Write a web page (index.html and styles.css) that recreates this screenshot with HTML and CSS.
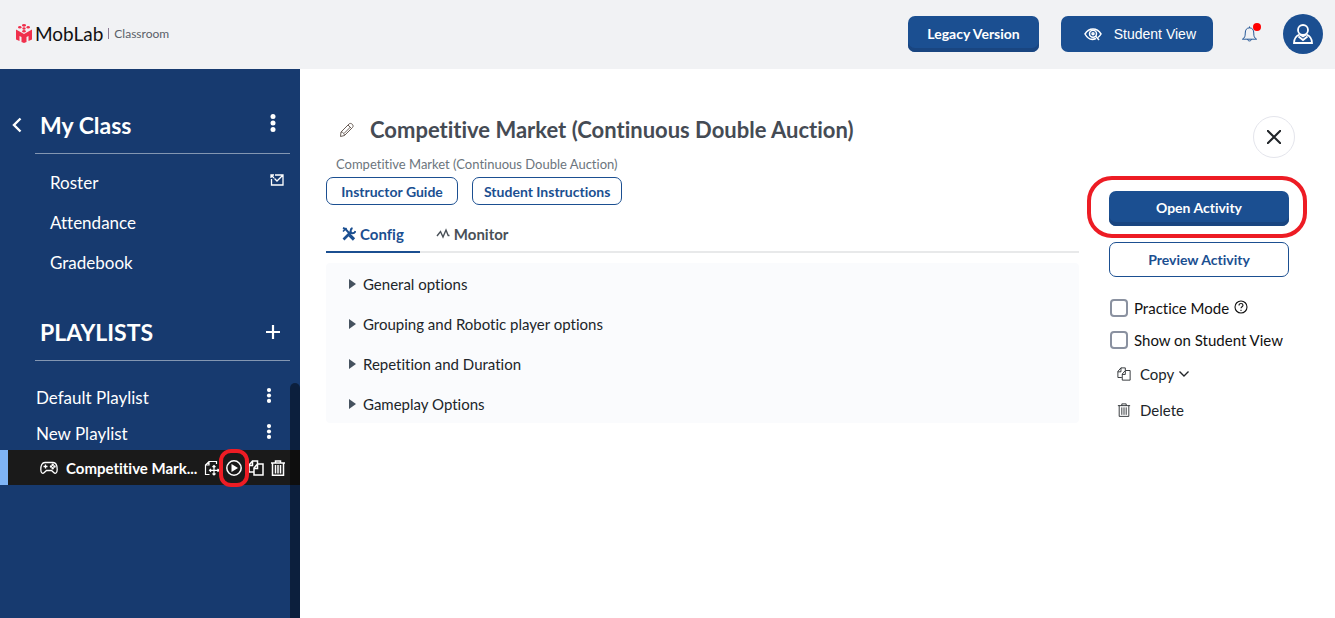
FILE: index.html
```html
<!DOCTYPE html>
<html lang="en">

<head>
    <meta charset="UTF-8">
    <meta name="viewport" content="width=device-width, initial-scale=1.0">
    <title>MobLab Classroom</title>
    <link rel="stylesheet" href="styles.css">
</head>

<body>
    <!-- shared icons -->
    <svg class="sprite" aria-hidden="true">
        <symbol id="dots" viewBox="0 0 6 18">
            <circle cx="3" cy="2.5" r="2.5" /><circle cx="3" cy="9" r="2.5" /><circle cx="3" cy="15.5" r="2.5" />
        </symbol>
        <symbol id="copy" viewBox="0 0 16 16">
            <path d="M5.500 12H1V5l3.500-4H9.500V3.500M1 5.500h3.500V1M6 15V8l3.500-4H15v11zM6 8.500h3.500V4" />
        </symbol>
        <symbol id="trash" viewBox="0 0 16 16">
            <path d="M1 3h14M5.500 3V1h5v2M2.500 3v12.300h11V3M5.500 5v8.500M8 5v8.500M10.500 5v8.500" />
        </symbol>
    </svg>

    <header class="topbar">
        <a class="brand" href="#">
            <svg class="brand-logo" viewBox="0 0 18 20">
                <g fill="#f0304c">
                    <ellipse cx="9" cy="2.300" rx="2" ry="1.400" /><ellipse cx="4.800" cy="4.300" rx="1.700" ry="1.200" /><ellipse cx="13.200" cy="4.300" rx="1.700" ry="1.200" />
                    <ellipse cx="9" cy="5.500" rx="1.600" ry="1.200" /><ellipse cx="9" cy="8.200" rx="1.800" ry="1.200" />
                    <path d="M1 6.500l8 4.500 8-4.500v10l-3.500 1.500v-5l-2 1V19L9 20l-2.500-1v-5l-2-1v5L1 16.500z" />
                </g>
            </svg>
            <span class="brand-name">MobLab</span>
            <span class="brand-sep"></span>
            <span class="brand-sub">Classroom</span>
        </a>
        <div class="top-actions">
            <button class="btn btn-primary btn-legacy">Legacy Version</button>
            <button class="btn btn-student">
                <svg class="icon-eye" viewBox="0 0 18 14">
                    <path d="M12 11.500C7.500 13.500 3.500 11.500 1 7c4-6.700 12-6.700 16 0-.8 1.500-1.800 2.600-3 3.500" />
                    <circle cx="9" cy="6.700" r="3.500" /><circle cx="9" cy="6.700" r="1" />
                    <path d="M11.500 9l3.500 4" />
                </svg>
                Student View
            </button>
            <button class="bell" aria-label="Notifications">
                <svg viewBox="0 0 18 18">
                    <path d="M9 1v1.500M1.500 14.500c2.500-1.500 3-3 3-6.500 0-3.500 1.500-5.500 4.500-5.500s4.500 2 4.500 5.500c0 3.500.5 5 3 6.500zM7 14.500c0 2.500 4 2.500 4 0" />
                </svg>
                <span class="bell-dot"></span>
            </button>
            <button class="avatar" aria-label="Account">
                <svg viewBox="0 0 20 20">
                    <circle cx="10" cy="6" r="5" />
                    <path d="M6.500 10.500C3 12 1 14.500 1 19h18c0-4.500-2-7-5.500-8.500M5.500 12.500l4.500 3.500 4.500-3.500M7 10.500l3 2 3-2" />
                </svg>
            </button>
        </div>
    </header>

    <div class="page">
        <aside class="sidebar">
            <div class="side-title">
                <button class="back" aria-label="Back">
                    <svg viewBox="0 0 10 16"><path d="M8.500 1.500L2 8l6.500 6.500" /></svg>
                </button>
                <h2>My Class</h2>
                <button class="more" aria-label="Class menu"><svg><use href="#dots" /></svg></button>
            </div>
            <nav class="side-nav">
                <div class="nav-row">
                    <a href="#">Roster</a>
                    <button class="mail" aria-label="Invite">
                        <svg viewBox="0 0 14 12"><path d="M5 1h8v10H1.500V5M1 1l3 3M1 4V1h3M4.500 4.500L7 7l6-6" /></svg>
                    </button>
                </div>
                <div class="nav-row"><a href="#">Attendance</a></div>
                <div class="nav-row"><a href="#">Gradebook</a></div>
            </nav>
            <div class="side-title side-title-playlists">
                <h2>PLAYLISTS</h2>
                <button class="add" aria-label="Add playlist">
                    <svg viewBox="0 0 14 14"><path d="M7 0v14M0 7h14" /></svg>
                </button>
            </div>
            <div class="playlists">
                <div class="playlist">
                    <a href="#">Default Playlist</a>
                    <button class="more more-small" aria-label="Playlist menu"><svg><use href="#dots" /></svg></button>
                </div>
                <div class="playlist">
                    <a href="#">New Playlist</a>
                    <button class="more more-small" aria-label="Playlist menu"><svg><use href="#dots" /></svg></button>
                </div>
                <div class="activity">
                    <svg class="gamepad" viewBox="0 0 18 14">
                        <path d="M5 1.500h8c3 0 4.200 3 4.200 7 0 4-2 4.500-3.500 3L11.500 9.500h-5l-2.200 2c-1.500 1.500-3.500 1-3.500-3 0-4 1.200-7 4.200-7zM3.500 5.500h4M5.500 3.500v4" />
                        <circle cx="11" cy="5.500" r=".6" /><circle cx="14.500" cy="5.500" r=".6" /><circle cx="12.700" cy="3.800" r=".6" /><circle cx="12.700" cy="7.200" r=".6" />
                    </svg>
                    <a href="#">Competitive Mark...</a>
                    <div class="activity-tools">
                        <button aria-label="Move">
                            <svg class="thin" viewBox="0 0 16 16">
                                <path d="M5.500 14.500H1.500V5L5 1.500h7.500V4M1.500 5H5V1.500M10 5.500v9.500M5.500 10.300H15M8.500 7L10 5.500 11.500 7M8.500 13.500L10 15l1.500-1.500M7 8.800l-1.500 1.500L7 11.800M13.500 8.800l1.500 1.500-1.500 1.500" />
                            </svg>
                        </button>
                        <button class="play" aria-label="Open">
                            <svg viewBox="0 0 16 16">
                                <circle cx="8" cy="8" r="7.200" />
                                <path class="solid" d="M5.500 4v8L12 8z" />
                            </svg>
                            <span class="ring ring-small"></span>
                        </button>
                        <button aria-label="Copy"><svg><use href="#copy" /></svg></button>
                        <button aria-label="Delete"><svg><use href="#trash" /></svg></button>
                    </div>
                </div>
                <div class="scrollbar"></div>
            </div>
        </aside>

        <main class="content">
            <section class="details">
                <div class="title-row">
                    <button class="edit" aria-label="Rename">
                        <svg viewBox="0 0 16 16">
                            <path d="M1.500 14.500l.5-4.500 8-8c2-2 5.500 1.500 3.500 3.500l-8 8zM2 10c2 0 3.500 1.500 3.500 3.500M9 3l4 4M5.500 11l6-6" />
                        </svg>
                    </button>
                    <h1>Competitive Market (Continuous Double Auction)</h1>
                </div>
                <p class="subtitle">Competitive Market (Continuous Double Auction)</p>
                <div class="guides">
                    <button class="btn btn-outline btn-small">Instructor Guide</button>
                    <button class="btn btn-outline btn-small">Student Instructions</button>
                </div>
                <div class="tabs">
                    <button class="tab active">
                        <svg class="tools" viewBox="0 0 14 14">
                            <path d="M7.500 8L12 12.500" stroke-width="3.200" /><path d="M1 1l2.500 1 4.500 5" stroke-width="2" />
                            <path d="M1.500 12.500L9 5" stroke-width="2.600" /><path d="M10.500 1C8 2 8 6 10.500 6.200c1.500 0 2.500-.7 3-2.200" stroke-width="2" />
                            <path d="M1 4.500L4.500 1" stroke-width="1.600" />
                        </svg>
                        Config
                    </button>
                    <button class="tab">
                        <svg class="pulse" viewBox="0 0 14 14"><path d="M1 9l3.500-4.500 2.500 5.500 3-7 2.200 5.500h1.300" /></svg>
                        Monitor
                    </button>
                </div>
                <div class="options">
                    <button class="option">General options</button>
                    <button class="option">Grouping and Robotic player options</button>
                    <button class="option">Repetition and Duration</button>
                    <button class="option">Gameplay Options</button>
                </div>
            </section>

            <section class="actions">
                <button class="close" aria-label="Close">
                    <svg viewBox="0 0 14 14"><path d="M0 0l14 14M14 0L0 14" /></svg>
                </button>
                <div class="open-wrap">
                    <button class="btn btn-primary btn-wide">Open Activity</button>
                    <span class="ring ring-large"></span>
                </div>
                <button class="btn btn-outline btn-wide">Preview Activity</button>
                <div class="checks">
                    <div class="check">
                        <input type="checkbox" id="practice">
                        <label for="practice">Practice Mode</label>
                        <button class="help" aria-label="About practice mode">
                            <svg viewBox="0 0 14 14">
                                <circle cx="7" cy="7" r="6" />
                                <path d="M5 5.500c0-2.700 4-2.500 4-.2C9 6.700 7 6.800 7 8.300M7 9.700v1.300" />
                            </svg>
                        </button>
                    </div>
                    <div class="check">
                        <input type="checkbox" id="show">
                        <label for="show">Show on Student View</label>
                    </div>
                </div>
                <button class="link-btn">
                    <svg><use href="#copy" /></svg>
                    Copy
                    <svg class="chevron" viewBox="0 0 10 6"><path d="M.5.5L5 5 9.500.5" /></svg>
                </button>
                <button class="link-btn">
                    <svg><use href="#trash" /></svg>
                    Delete
                </button>
            </section>
        </main>
    </div>
</body>

</html>
```
FILE: styles.css
```css
* {
    box-sizing: border-box;
}

body {
    margin: 0;
    min-height: 100vh;
    display: flex;
    flex-direction: column;
    font-family: Lato, sans-serif;
    font-size: 15px;
    font-variant-ligatures: none;
    color: #212529;
    background: #fff;
}

h1,
h2,
p {
    margin: 0;
}

a {
    color: inherit;
    text-decoration: none;
}

button {
    padding: 0;
    border: none;
    background: none;
    color: inherit;
    font-family: inherit;
    font-size: inherit;
    font-variant-ligatures: none;
    cursor: pointer;
}

svg {
    display: block;
    flex-shrink: 0;
    fill: none;
    stroke: currentColor;
}

.sprite {
    position: absolute;
    width: 0;
    height: 0;
}

/* top bar */
.topbar {
    display: flex;
    justify-content: space-between;
    align-items: center;
    padding: 14px 12px 15px 15px;
    background: #f1f2f4;
}

.brand {
    display: flex;
    align-items: center;
    padding-bottom: 2px;
}

.brand-logo {
    width: 18px;
    height: 20px;
    margin-right: 2px;
    stroke: none;
}

.brand-name {
    color: #111;
    font-size: 19px;
}

.brand-sep {
    width: 1px;
    height: 11px;
    margin: 0 5px;
    background: #8c7a94;
}

.brand-sub {
    color: #5a6068;
    font-size: 12px;
}

.top-actions {
    display: flex;
    align-items: center;
}

.btn {
    display: flex;
    align-items: center;
    justify-content: center;
    border-radius: 7px;
    font-size: 14px;
    font-weight: bold;
}

.btn-primary {
    padding-bottom: 2px;
    color: #fff;
    background: #1b4f91;
    box-shadow: inset 0 -4px 0 #194580;
}

.btn-outline {
    color: #1b4f91;
    background: #fff;
    border: 1px solid #1b4f91;
}

.btn-legacy {
    height: 36px;
    padding: 0 19px 2px;
    margin-right: 22px;
}

.btn-student {
    height: 36px;
    padding: 0 17px 0 23px;
    gap: 12px;
    margin-right: 28px;
    color: #fff;
    background: #1b4f91;
    font-family: "Liberation Sans", Arial, sans-serif;
    font-weight: normal;
}

.icon-eye {
    width: 18px;
    height: 14px;
    stroke-width: 1.5;
}

.bell {
    position: relative;
    margin-right: 25px;
    color: #1b4f91;
}

.bell svg {
    width: 17px;
    height: 18px;
}

.bell-dot {
    position: absolute;
    top: -2px;
    right: -3px;
    width: 8px;
    height: 8px;
    border-radius: 50%;
    background: #f00;
}

.avatar {
    display: flex;
    align-items: center;
    justify-content: center;
    width: 40px;
    height: 40px;
    border-radius: 50%;
    color: #fff;
    background: #1b4f91;
}

.avatar svg {
    width: 20px;
    height: 20px;
    stroke-width: 1.8;
}

.page {
    flex: 1;
    display: flex;
}

/* sidebar */
.sidebar {
    width: 300px;
    flex-shrink: 0;
    display: flex;
    flex-direction: column;
    padding-top: 28px;
    color: #fff;
    background: #173a6f;
}

.side-title {
    display: flex;
    align-items: center;
    position: relative;
    height: 57px;
    margin: 0 10px 0 35px;
    padding: 0 11px 0 5px;
    border-bottom: 1px solid #8396b2;
}

.side-title h2 {
    flex: 1;
    font-size: 23px;
    line-height: 30px;
}

.back {
    position: absolute;
    left: -23px;
}

.back svg {
    width: 10px;
    height: 16px;
    stroke-width: 2.4;
}

.more svg {
    width: 6px;
    height: 18px;
    fill: currentColor;
    stroke: none;
}

.side-title .more {
    margin: 0 3px 4px 0;
}

.more-small svg {
    width: 6px;
    height: 15px;
    margin-bottom: 3px;
}

.side-nav {
    padding: 8px 16px 0 50px;
}

.nav-row {
    display: flex;
    align-items: center;
    justify-content: space-between;
    height: 40px;
    font-size: 17px;
}

.mail svg {
    width: 14px;
    height: 12px;
    margin-bottom: 4px;
    stroke-width: 1.3;
}

.side-title-playlists {
    margin-top: 22px;
    padding-right: 10px;
}

.add svg {
    width: 14px;
    height: 14px;
    stroke-width: 2.2;
}

.playlists {
    flex: 1;
    position: relative;
    padding-top: 17px;
}

.playlist {
    display: flex;
    align-items: center;
    justify-content: space-between;
    height: 36px;
    padding: 2px 28px 0 36px;
    font-size: 17px;
}

.activity {
    display: flex;
    align-items: center;
    height: 35px;
    padding: 0 14px 0 32px;
    border-left: 8px solid #7fb4f5;
    background: #1a1a1a;
    font-weight: bold;
}

.activity a {
    flex: 1;
    white-space: nowrap;
}

.gamepad {
    width: 18px;
    height: 14px;
    margin-right: 8px;
    stroke-width: 1.3;
}

.activity-tools {
    display: flex;
    gap: 6px;
}

.activity-tools svg {
    width: 16px;
    height: 16px;
    stroke-width: 1.5;
}

.activity-tools .thin {
    stroke-width: 1.2;
}

.activity-tools .solid {
    fill: currentColor;
    stroke: none;
}

.play {
    position: relative;
}

/* red callouts */
.ring {
    position: absolute;
    border: 4px solid #ed1c24;
    pointer-events: none;
}

.ring-small {
    inset: -11px -7px;
    border-radius: 12px;
}

.ring-large {
    inset: -15px -18px -12px -22px;
    border-radius: 25px;
}

.scrollbar {
    position: absolute;
    top: 22px;
    right: 0;
    bottom: 0;
    width: 10px;
    border-radius: 5px 5px 0 0;
    background: rgba(0, 0, 0, 0.45);
}

/* content */
.content {
    flex: 1;
    min-width: 0;
    display: flex;
    gap: 30px;
    padding: 46px 46px 0 26px;
}

.details {
    flex: 1;
    min-width: 0;
}

.title-row {
    display: flex;
    align-items: center;
    gap: 15px;
    padding-left: 13px;
}

.title-row h1 {
    color: #454b54;
    font-size: 22px;
    line-height: 30px;
}

.edit {
    color: #6b5f58;
}

.edit svg {
    width: 16px;
    height: 16px;
}

.subtitle {
    padding: 11px 10px 5px;
    color: #6c757d;
    font-size: 13px;
    line-height: 16px;
}

.guides {
    display: flex;
    gap: 14px;
}

.btn-small {
    min-width: 132px;
    height: 28px;
    padding: 0 11px;
}

.tabs {
    display: flex;
    height: 48px;
    border-bottom: 2px solid #e8e9ea;
}

.tab {
    display: flex;
    align-items: center;
    gap: 4px;
    height: 48px;
    padding: 12px 16px 0;
    border-bottom: 2px solid transparent;
    color: #495057;
    font-weight: bold;
}

.tab.active {
    color: #1b4f91;
    border-bottom-color: #1b4f91;
}

.tab svg {
    width: 14px;
    height: 14px;
}

.tab .pulse {
    stroke-width: 1.4;
}

.options {
    margin-top: 10px;
    padding: 0 23px;
    border-radius: 4px;
    background: #fafbfd;
}

.option {
    display: flex;
    align-items: center;
    gap: 7px;
    width: 100%;
    height: 40px;
    padding-top: 1px;
    text-align: left;
}

.option::before {
    content: "";
    border: 5px solid transparent;
    border-left: 7px solid #46525f;
    border-right: none;
}

.actions {
    display: flex;
    flex-direction: column;
    align-items: flex-start;
}

.close {
    display: flex;
    align-items: center;
    justify-content: center;
    align-self: flex-end;
    width: 42px;
    height: 42px;
    margin: 1px -6px 33px 0;
    border: 1px solid #e4e5ec;
    border-radius: 50%;
}

.close svg {
    width: 14px;
    height: 14px;
    stroke-width: 2;
}

.open-wrap {
    position: relative;
    margin-bottom: 16px;
}

.btn-wide {
    width: 180px;
    height: 35px;
}

.checks {
    margin: 15px 0 0 1px;
}

.check {
    display: flex;
    align-items: center;
    height: 32px;
    color: #111;
}

.check input {
    appearance: none;
    width: 18px;
    height: 18px;
    margin: 0 6px 0 0;
    border: 2px solid #8a91a0;
    border-radius: 4px;
}

.help {
    margin: 0 0 3px 5px;
}

.help svg {
    width: 14px;
    height: 14px;
    stroke-width: 1.1;
}

.link-btn {
    display: flex;
    align-items: center;
    height: 36px;
    padding: 0 0 1px 8px;
}

.link-btn svg {
    width: 14px;
    height: 14px;
    margin-right: 9px;
}

.link-btn .chevron {
    width: 10px;
    height: 6px;
    margin: 0 0 0 5px;
    stroke-width: 1.4;
}
```
